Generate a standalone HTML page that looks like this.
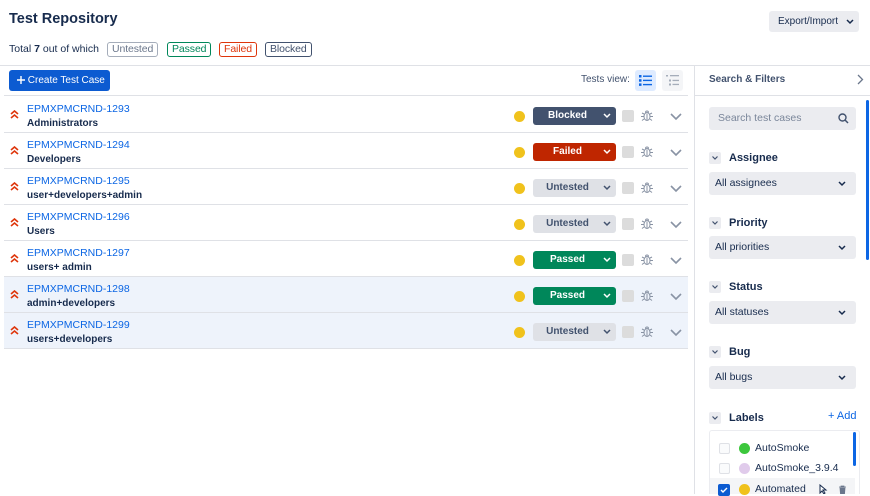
<!DOCTYPE html>
<html><head><meta charset="utf-8"><style>
*{box-sizing:border-box;margin:0;padding:0}
body{width:870px;height:494px;overflow:hidden;background:#fff;font-family:"Liberation Sans",sans-serif;color:#172b4d;position:relative;font-size:11px}
.abs{position:absolute}
.tag{position:absolute;top:42px;height:15px;border:1px solid;border-radius:3px;font-size:10.5px;line-height:13px;padding:0 4px;letter-spacing:-.1px}
.row{position:absolute;left:4px;width:684px;height:36px;border-bottom:1px solid #dfe1e6}
.row.hl{background:#eef3fb}
.key{position:absolute;left:23px;top:6px;color:#0c66e4;font-size:10.5px}
.nm{position:absolute;left:23px;top:21px;color:#172b4d;font-size:10px;font-weight:bold}
.pri{position:absolute;left:6px;top:13px}
.dot{position:absolute;left:510px;top:14px;width:11px;height:11px;border-radius:50%;background:#f0c21c}
.pill{position:absolute;left:529px;top:10px;width:83px;height:18px;border-radius:3px;font-size:10px;line-height:18px;text-align:center;padding-right:14px;font-weight:bold}
.pill svg{position:absolute;right:5px;top:6px}
.sq{position:absolute;left:618px;top:13px;width:12px;height:12px;background:#dcdcdc;border-radius:2px}
.bug{position:absolute;left:637px;top:12px}
.chev{position:absolute;left:666px;top:16px}
.sec{position:absolute;left:709px;font-size:11px;font-weight:bold}
.sec .b{display:inline-block;width:12px;height:12px;background:#ebecf0;border-radius:2px;vertical-align:middle;margin-right:8px;position:relative}
.sel{position:absolute;left:709px;width:147px;height:23px;background:#ebecf0;border-radius:3px;font-size:10.5px;line-height:23px;padding-left:6px}
.sel svg{position:absolute;right:10px;top:9px}
</style></head><body>
<div class="abs" style="left:9px;top:11px;font-size:14.5px;font-weight:bold">Test Repository</div>
<div class="abs" style="left:769px;top:11px;width:90px;height:21px;background:#ebecf0;border-radius:3px;font-size:10px;line-height:21px;padding-left:9px">Export/Import
<svg class="abs" style="left:77px;top:8px" width="8" height="6" viewBox="0 0 8 6"><path d="M1 1l3 3 3-3" stroke="#172b4d" stroke-width="1.5" fill="none"/></svg></div>
<div class="abs" style="left:9px;top:43px;font-size:10.5px">Total <b>7</b> out of which</div>
<div class="tag" style="left:107px;color:#6b778c;border-color:#a5adba">Untested</div>
<div class="tag" style="left:167px;color:#00875a;border-color:#00875a">Passed</div>
<div class="tag" style="left:219px;color:#de350b;border-color:#de350b">Failed</div>
<div class="tag" style="left:265px;color:#42526e;border-color:#42526e">Blocked</div>
<div class="abs" style="left:0;top:65px;width:870px;height:1px;background:#dfe1e6"></div>
<div class="abs" style="left:694px;top:65px;width:1px;height:429px;background:#dfe1e6"></div>
<div class="abs" style="left:9px;top:70px;width:101px;height:21px;background:#0c5bd1;border-radius:3px;color:#fff;font-size:10px;line-height:21px;padding-left:8px;white-space:nowrap">
<svg style="vertical-align:-1px" width="8" height="8" viewBox="0 0 8 8"><path d="M4 0v8M0 4h8" stroke="#fff" stroke-width="1.4"/></svg> Create Test Case</div>
<div class="abs" style="left:581px;top:74px;color:#42526e;font-size:10px">Tests view:</div>
<div class="abs" style="left:635px;top:70px;width:21px;height:21px;background:#deebff;border-radius:3px">
<svg class="abs" style="left:4px;top:5px" width="13" height="11" viewBox="0 0 13 11"><g fill="#0c66e4"><rect x="0" y="0" width="2.5" height="2.5"/><rect x="0" y="4.2" width="2.5" height="2.5"/><rect x="0" y="8.4" width="2.5" height="2.5"/><rect x="4" y="0.5" width="9" height="1.4"/><rect x="4" y="4.7" width="9" height="1.4"/><rect x="4" y="8.9" width="9" height="1.4"/></g></svg></div>
<div class="abs" style="left:662px;top:70px;width:21px;height:21px;background:#f4f5f7;border-radius:3px">
<svg class="abs" style="left:4px;top:5px" width="13" height="11" viewBox="0 0 13 11"><g fill="#a5adba"><rect x="0" y="0" width="2" height="1.5"/><rect x="4" y="0" width="9" height="1.3"/><rect x="3" y="4.5" width="2" height="2"/><rect x="6.5" y="4.8" width="6.5" height="1.3"/><rect x="3" y="8.5" width="2" height="2"/><rect x="6.5" y="8.8" width="6.5" height="1.3"/></g></svg></div>
<div class="abs" style="left:4px;top:95px;width:684px;height:1px;background:#dfe1e6"></div>
<div class="abs" style="left:709px;top:74px;font-size:10px;font-weight:bold;color:#42526e">Search &amp; Filters</div>
<svg class="abs" style="left:857px;top:74px" width="7" height="11" viewBox="0 0 7 11"><path d="M1 1l4.5 4.5L1 10" stroke="#6b778c" stroke-width="1.3" fill="none"/></svg>
<div class="abs" style="left:694px;top:95px;width:176px;height:1px;background:#dfe1e6"></div>
<div class="abs" style="left:866px;top:100px;width:3px;height:160px;background:#0c66e4;border-radius:2px"></div>

<div id="rows"></div>

<div class="abs" style="left:709px;top:107px;width:147px;height:23px;background:#ebecf0;border-radius:3px;color:#7a869a;font-size:10.5px;line-height:23px;padding-left:9px">Search test cases
<svg class="abs" style="right:7px;top:6px" width="11" height="11" viewBox="0 0 11 11"><circle cx="4.5" cy="4.5" r="3.5" stroke="#42526e" stroke-width="1.4" fill="none"/><path d="M7 7l3 3" stroke="#42526e" stroke-width="1.5"/></svg></div>

<div class="sec" style="top:152px"><span class="b"><svg class="abs" style="left:3px;top:4px" width="6" height="4" viewBox="0 0 6 4"><path d="M.5.5l2.5 2.5 2.5-2.5" stroke="#42526e" stroke-width="1.2" fill="none"/></svg></span>Assignee</div>
<div class="sel" style="top:172px">All assignees<svg width="8" height="6" viewBox="0 0 8 6"><path d="M1 1l3 3 3-3" stroke="#172b4d" stroke-width="1.5" fill="none"/></svg></div>
<div class="sec" style="top:217px"><span class="b"><svg class="abs" style="left:3px;top:4px" width="6" height="4" viewBox="0 0 6 4"><path d="M.5.5l2.5 2.5 2.5-2.5" stroke="#42526e" stroke-width="1.2" fill="none"/></svg></span>Priority</div>
<div class="sel" style="top:236px">All priorities<svg width="8" height="6" viewBox="0 0 8 6"><path d="M1 1l3 3 3-3" stroke="#172b4d" stroke-width="1.5" fill="none"/></svg></div>
<div class="sec" style="top:281px"><span class="b"><svg class="abs" style="left:3px;top:4px" width="6" height="4" viewBox="0 0 6 4"><path d="M.5.5l2.5 2.5 2.5-2.5" stroke="#42526e" stroke-width="1.2" fill="none"/></svg></span>Status</div>
<div class="sel" style="top:301px">All statuses<svg width="8" height="6" viewBox="0 0 8 6"><path d="M1 1l3 3 3-3" stroke="#172b4d" stroke-width="1.5" fill="none"/></svg></div>
<div class="sec" style="top:346px"><span class="b"><svg class="abs" style="left:3px;top:4px" width="6" height="4" viewBox="0 0 6 4"><path d="M.5.5l2.5 2.5 2.5-2.5" stroke="#42526e" stroke-width="1.2" fill="none"/></svg></span>Bug</div>
<div class="sel" style="top:366px">All bugs<svg width="8" height="6" viewBox="0 0 8 6"><path d="M1 1l3 3 3-3" stroke="#172b4d" stroke-width="1.5" fill="none"/></svg></div>
<div class="sec" style="top:412px"><span class="b"><svg class="abs" style="left:3px;top:4px" width="6" height="4" viewBox="0 0 6 4"><path d="M.5.5l2.5 2.5 2.5-2.5" stroke="#42526e" stroke-width="1.2" fill="none"/></svg></span>Labels</div>
<div class="abs" style="left:828px;top:410px;color:#0c66e4;font-size:11px">+ Add</div>
<div class="abs" style="left:709px;top:430px;width:151px;height:64px;border:1px solid #ebecf0;border-bottom:none;border-radius:3px 3px 0 0"></div>
<div class="abs" style="left:853px;top:432px;width:3px;height:34px;background:#0c66e4;border-radius:2px"></div>
<div class="abs" style="left:719px;top:443px;width:11px;height:11px;border:1px solid #dfe1e6;border-radius:2px;background:#fafbfc"></div>
<div class="abs" style="left:739px;top:443px;width:11px;height:11px;border-radius:50%;background:#3cc73c"></div>
<div class="abs" style="left:755px;top:442px;font-size:10.5px">AutoSmoke</div>
<div class="abs" style="left:719px;top:463px;width:11px;height:11px;border:1px solid #dfe1e6;border-radius:2px;background:#fafbfc"></div>
<div class="abs" style="left:739px;top:463px;width:11px;height:11px;border-radius:50%;background:#e0cbeb"></div>
<div class="abs" style="left:755px;top:462px;font-size:10.5px">AutoSmoke_3.9.4</div>
<div class="abs" style="left:710px;top:478px;width:145px;height:16px;background:#f4f5f7"></div>
<div class="abs" style="left:718px;top:484px;width:12px;height:12px;background:#0c5bd1;border-radius:2px"><svg class="abs" style="left:2px;top:3px" width="8" height="6" viewBox="0 0 8 6"><path d="M1 3l2 2 4-4" stroke="#fff" stroke-width="1.4" fill="none"/></svg></div>
<div class="abs" style="left:739px;top:484px;width:11px;height:11px;border-radius:50%;background:#f0c21c"></div>
<div class="abs" style="left:755px;top:483px;font-size:10.5px">Automated</div>
<svg class="abs" style="left:819px;top:484px" width="10" height="10" viewBox="0 0 10 10"><path d="M1 1v8l2-2 2 3 1-1-2-3h3z" fill="#fff" stroke="#172b4d" stroke-width="1"/></svg>
<svg class="abs" style="left:838px;top:485px" width="9" height="9" viewBox="0 0 9 9"><path d="M1 2h7M3 2V1h3v1M2 3h5l-.5 6h-4z" fill="#6b778c" stroke="#6b778c" stroke-width=".8"/></svg>

<script>
const data=[["1293","Administrators","Blocked",0],["1294","Developers","Failed",0],["1295","user+developers+admin","Untested",0],["1296","Users","Untested",0],["1297","users+ admin","Passed",0],["1298","admin+developers","Passed",1],["1299","users+developers","Untested",1]];
const st={Blocked:["#42526e","#fff"],Failed:["#bf2600","#fff"],Untested:["#dfe1e6","#42526e"],Passed:["#00875a","#fff"]};
let h="";
data.forEach((d,i)=>{const top=97+i*36;const c=st[d[2]];
h+=`<div class="row${d[3]?' hl':''}" style="top:${top}px">
<svg class="pri" width="9" height="9" viewBox="0 0 9 9"><path d="M1 4l3.5-3L8 4M1 8l3.5-3L8 8" stroke="#de350b" stroke-width="1.6" fill="none"/></svg>
<div class="key">EPMXPMCRND-${d[0]}</div><div class="nm">${d[1]}</div>
<div class="dot"></div>
<div class="pill" style="background:${c[0]};color:${c[1]}">${d[2]}<svg width="8" height="6" viewBox="0 0 8 6"><path d="M1 1l3 3 3-3" stroke="${c[1]}" stroke-width="1.5" fill="none"/></svg></div>
<div class="sq"></div>
<svg class="bug" width="12" height="13" viewBox="0 0 12 13"><g stroke="#8993a4" stroke-width="1" fill="none"><ellipse cx="6" cy="7.5" rx="3" ry="4"/><path d="M4.5 3.5a1.5 1.5 0 0 1 3 0M3 7.5H0M12 7.5H9M3 5L1 4M9 5l2-1M3 10l-2 1.5M9 10l2 1.5M6 4.5v7"/></g></svg>
<svg class="chev" width="12" height="8" viewBox="0 0 12 8"><path d="M1 1l5 5 5-5" stroke="#8993a4" stroke-width="1.6" fill="none"/></svg>
</div>`;});
document.getElementById('rows').outerHTML=h;
</script>
</body></html>
